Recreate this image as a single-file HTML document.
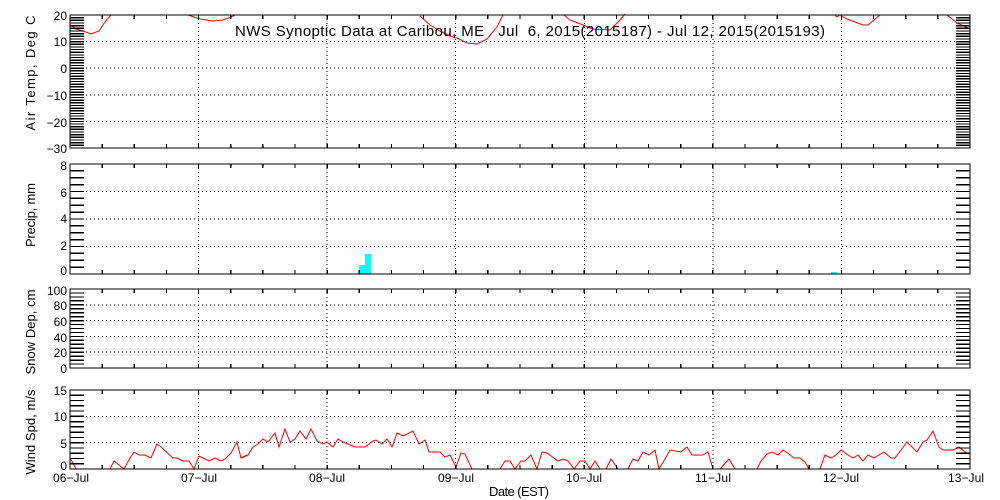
<!DOCTYPE html>
<html><head><meta charset="utf-8"><style>
html,body{margin:0;padding:0;background:#fff;width:1000px;height:500px;overflow:hidden}
svg{display:block}
text{font-family:"Liberation Sans",sans-serif;font-size:12px;fill:#000}
</style></head><body>
<svg id="s" width="1000" height="500" viewBox="0 0 1000 500" xmlns="http://www.w3.org/2000/svg">
<g id="g" stroke="#000" stroke-width="1" fill="none" shape-rendering="crispEdges"></g>
<rect x="359" y="265" width="6" height="9" fill="#00ffff"/>
<rect x="365" y="254" width="6" height="20" fill="#00ffff"/>
<rect x="831" y="272" width="6" height="2" fill="#00ffff"/>
<g fill="none" stroke="#f00" stroke-width="1">
<polyline points="70.7,25 76,29 83,31 91,34 99,31 105,22 111,15"/>
<polyline points="188,15 200,19 213,21 223,20 231,17 235,15"/>
<polyline points="420,16 430,25 440,31 450,36 457,38 467,43 477,44 487,39 497,27 503,15"/>
<polyline points="564,15 570,20 583,25 593,29 610,30 620,20 625,14"/>
<polyline points="835,15 837,17 840,15 847,19 863,25 868,25 880,15"/>
<polyline points="947,15 957,23 970,29"/>
<polyline points="70.7,459 76,469 110,469 114,461 124,469 130,458 134,452 139,455 145,455 151,458 157,444 161,447 173,458 177,458 183,461 189,461 194,469 199,456 203,458 209,461 215,458 221,461 225,459 231,453 237,442 241,458 247,455 242,458 248,455 253,447 258,444 263,439 268,442 275,433 279,447 285,429 290,442 295,439 300,431 306,439 311,429 317,441 323,444 327,442 333,447 338,439 343,442 355,447 365,447 373,441 376,440 382,444 387,439 392,447 397,433 403,436 413,431 419,444 425,440 429,452 440,452 445,457 450,455 456,467 461,453 465,454 472,469 500,469 505,461 510,461 515,469 521,461 525,461 531,455 537,469 542,452 547,453 558,461 563,459 568,461 574,469 580,461 585,461 590,469 595,461 600,469 606,469 611,459 618,469 628,469 633,459 638,461 643,452 649,455 655,450 659,469 665,459 670,450 681,452 687,447 692,455 703,455 708,452 713,469 720,469 729,459 735,469 757,469 761,461 767,454 772,452 778,455 783,450 789,454 794,458 800,458 805,462 809,469 820,469 825,455 831,458 836,455 841,450 848,455 853,458 858,455 863,461 868,455 874,458 884,452 891,458 895,458 907,442 917,452 923,442 927,440 933,431 939,447 943,450 953,450 959,447 965,452 969,454"/>
</g>
<g id="ax" stroke="#000" stroke-width="1.3" fill="none" shape-rendering="crispEdges"></g>
<text x="235" y="36" style="font-size:15px;white-space:pre" xml:space="preserve" textLength="590" lengthAdjust="spacing">NWS Synoptic Data at Caribou, ME   Jul  6, 2015(2015187) - Jul 12, 2015(2015193)</text>
<g text-anchor="end">
<text x="67" y="20">20</text><text x="67" y="46">10</text><text x="67" y="73">0</text><text x="67" y="100">−10</text><text x="67" y="127">−20</text><text x="67" y="153">−30</text>
<text x="67" y="170">8</text><text x="67" y="223">4</text><text x="67" y="197">6</text><text x="67" y="250">2</text><text x="67" y="275">0</text>
<text x="67" y="295">100</text><text x="67" y="310">80</text><text x="67" y="326">60</text><text x="67" y="342">40</text><text x="67" y="357">20</text><text x="67" y="373">0</text>
<text x="67" y="395">15</text><text x="67" y="421">10</text><text x="67" y="448">5</text><text x="67" y="470">0</text>
</g>
<g text-anchor="middle">
<text x="71" y="482" textLength="36">06−Jul</text><text x="199" y="482" textLength="36">07−Jul</text><text x="327" y="482" textLength="36">08−Jul</text><text x="456" y="482" textLength="36">09−Jul</text><text x="584" y="482" textLength="36">10−Jul</text><text x="713" y="482" textLength="36">11−Jul</text><text x="841" y="482" textLength="36">12−Jul</text><text x="966" y="482" textLength="36">13−Jul</text>
<text x="519" y="496" style="font-size:13px" textLength="60">Date (EST)</text>
<text transform="translate(35,73) rotate(-90)" style="font-size:13px" textLength="115">Air Temp, Deg C</text>
<text transform="translate(35,215) rotate(-90)" style="font-size:13px" textLength="64">Precip, mm</text>
<text transform="translate(35,332) rotate(-90)" style="font-size:13px" textLength="85">Snow Dep, cm</text>
<text transform="translate(35,432) rotate(-90)" style="font-size:13px" textLength="85">Wind Spd, m/s</text>
</g>
</svg>
<script>
var g=document.getElementById('g'),ax=document.getElementById('ax'),NS='http://www.w3.org/2000/svg';
function L(p,x1,y1,x2,y2,dash){var l=document.createElementNS(NS,'line');l.setAttribute('x1',x1);l.setAttribute('y1',y1);l.setAttribute('x2',x2);l.setAttribute('y2',y2);if(dash)l.setAttribute('stroke-dasharray','1,3');p.appendChild(l);}
var X0=70,X1=970,D=900/7;
var panels=[[15,148,-30,20,1,10],[164,274,0,8,0.5,2],[289,368,0,100,5,20],[390,469,0,15,1,5]];
panels.forEach(function(p){
 var t=p[0],b=p[1],lo=p[2],hi=p[3],mi=p[4],ma=p[5];
 function y(v){return b-(v-lo)/(hi-lo)*(b-t);}
 for(var d=1;d<7;d++){L(g,X0+d*D,t,X0+d*D,b,1);}
 for(var v=lo+ma;v<hi-1e-6;v+=ma){L(g,X0,y(v),X1,y(v),1);}
 for(var v=lo;v<=hi+1e-6;v+=mi){L(ax,X0,y(v),X0+14,y(v));L(ax,X1-14,y(v),X1,y(v));}
 for(var k=1;k<28;k++){var x=X0+k*D/4;L(ax,x,t,x,t+4);L(ax,x,b,x,b-4);}
 var r=document.createElementNS(NS,'rect');r.setAttribute('x',X0);r.setAttribute('y',t);r.setAttribute('width',X1-X0);r.setAttribute('height',b-t);ax.appendChild(r);
});
</script>
</body></html>
